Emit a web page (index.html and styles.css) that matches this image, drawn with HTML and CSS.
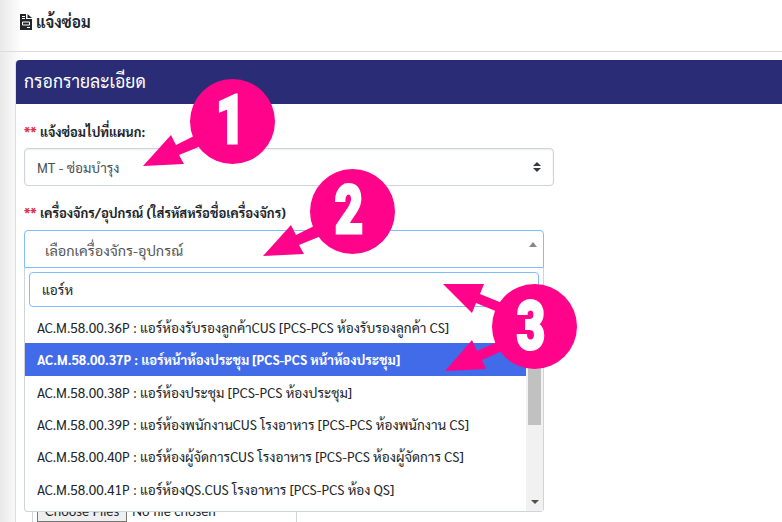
FILE: index.html
```html
<!DOCTYPE html>
<html lang="th">
<head>
<meta charset="utf-8">
<title>แจ้งซ่อม</title>
<link rel="stylesheet" href="styles.css">
</head>
<body>
<header class="topbar">
  <svg class="doc" viewBox="0 0 12 16" width="12" height="16"><path d="M0 0h6v5h6v11H0zM7.500 0L12 4H7.500z" fill="#212529"/><path d="M2 2.500h3M2 4.500h3M7 13.500h3" stroke="#fff"/><path d="M2.500 8h7v3h-7z" fill="none" stroke="#fff"/></svg>
  <h1><span class="fit t-title">แจ้งซ่อม</span></h1>
</header>
<main class="card">
  <div class="card-head"><span class="fit t-head">กรอกรายละเอียด</span></div>
  <div class="card-body">
    <label class="label"><b class="req">**</b><span class="fit t-l1">แจ้งซ่อมไปที่แผนก:</span></label>
    <div class="select"><span class="fit t-s1">MT - ซ่อมบำรุง</span>
      <svg width="8" height="10" viewBox="0 0 8 10"><path d="M0 4l4-4 4 4zM0 6h8l-4 4z" fill="#343a40"/></svg>
    </div>
    <label class="label second"><b class="req">**</b><span class="fit t-l2">เครื่องจักร/อุปกรณ์ (ใส่รหัสหรือชื่อเครื่องจักร)</span></label>
    <div class="combo">
      <div class="combo-value"><span class="fit t-s2">เลือกเครื่องจักร-อุปกรณ์</span>
        <svg width="8" height="5" viewBox="0 0 8 5"><path d="M0 5l4-5 4 5z" fill="#888"/></svg>
      </div>
      <div class="menu">
        <div class="search"><span class="fit">แอร์ห</span></div>
        <div class="list">
          <ul>
            <li><span class="fit">AC.M.58.00.36P : แอร์ห้องรับรองลูกค้าCUS [PCS-PCS ห้องรับรองลูกค้า CS]</span></li>
            <li class="active"><span class="fit">AC.M.58.00.37P : แอร์หน้าห้องประชุม [PCS-PCS หน้าห้องประชุม]</span></li>
            <li><span class="fit">AC.M.58.00.38P : แอร์ห้องประชุม [PCS-PCS ห้องประชุม]</span></li>
            <li><span class="fit">AC.M.58.00.39P : แอร์ห้องพนักงานCUS โรงอาหาร [PCS-PCS ห้องพนักงาน CS]</span></li>
            <li><span class="fit">AC.M.58.00.40P : แอร์ห้องผู้จัดการCUS โรงอาหาร [PCS-PCS ห้องผู้จัดการ CS]</span></li>
            <li><span class="fit">AC.M.58.00.41P : แอร์ห้องQS.CUS โรงอาหาร [PCS-PCS ห้อง QS]</span></li>
          </ul>
          <div class="scroll"><div class="thumb"></div><svg width="8" height="4" viewBox="0 0 8 4"><path d="M0 0h8l-4 4z" fill="#505050"/></svg></div>
        </div>
      </div>
    </div>
    <div class="upload"><span class="choose">Choose Files</span><span>No file chosen</span></div>
  </div>
</main>
<svg class="marks" width="782" height="522" viewBox="0 0 782 522">
  <g fill="#ff048b">
    <circle cx="232.500" cy="121.500" r="42.500"/><path d="M143 166l28-31 5 10 20-10 5 11-22 9 5 9z"/>
    <circle cx="352.500" cy="211.500" r="42.500"/><path d="M263 256l28-31 5 10 20-10 5 11-22 9 5 9z"/>
    <circle cx="534.500" cy="326.500" r="42.500"/><path d="M443 284h41l-4 10 22 9-4 9-22-9-4 10zM445 371l27-31 5 11 20-9 5 9-20 9 4 9z"/>
  </g>
  <g class="nums">
    <text transform="translate(230.500 143) scale(.76 1)">1</text>
    <text transform="translate(349 233) scale(.74 1)">2</text>
    <text transform="translate(531 348.500) scale(.74 1)">3</text>
  </g>
</svg>
</body>
</html>
```
FILE: styles.css
```css
* { box-sizing: border-box; }
body { margin: 0; width: 782px; height: 522px; overflow: hidden; position: relative; background: linear-gradient(90deg, #e9e9e9 0, #fff 22px); font: 14px/20px Sarabun, Lato, "Noto Sans Thai Looped", "Noto Looped Thai", Loma, Garuda, Waree, Umpush, Laksaman, sans-serif; color: #212529; }
.fit { display: inline-block; white-space: nowrap; transform: scaleX(.971); transform-origin: 0 50%; }
.topbar { height: 52px; border-bottom: 1px solid #dcdcdc; display: flex; align-items: center; gap: 4px; padding: 0 20px 8px; }
h1 { margin: 0; font-size: 16px; line-height: 24px; font-weight: 700; }
.t-title { transform: scaleX(.955); }
.t-head { transform: scaleX(.975); }
.t-l1 { transform: scaleX(.92); }
.t-l2 { transform: scaleX(.933); }
.t-s2 { transform: scaleX(1.03); }
.card { margin: 8px 0 0 15px; height: 462px; border-left: 1px solid #dedede; border-radius: 4px 0 0; background: #fff; }
.card-head { height: 44px; padding: 0 8px 2px; display: flex; align-items: center; background: #2a2d75; color: #fff; font-size: 18px; border-radius: 4px 0 0; }
.card-body { padding: 17px 0 0 8px; }
.label { display: flex; gap: 3px; height: 27px; line-height: 20px; font-weight: 700; }
.req { color: #dc3545; }
.select { width: 530px; height: 38px; border: 1px solid #ced4da; border-radius: 4px; display: flex; align-items: center; justify-content: space-between; padding: 0 12px; color: #495057; box-shadow: inset 0 1px 2px rgba(0,0,0,.075); }
.second { margin-top: 16px; height: 28px; }
.combo { width: 520px; position: relative; }
.combo-value { height: 38px; border: 1px solid #80bdff; border-radius: 4px 4px 0 0; display: flex; justify-content: space-between; padding: 9px 6px 0 20px; color: #555; }
.combo-value svg { margin-top: 2px; }
.menu { position: absolute; top: 38px; left: 0; width: 520px; height: 244px; border: 1px solid #ced4da; border-top: 0; border-radius: 0 0 4px 4px; background: #fff; padding: 4px 0 0; }
.search { margin: 0 4px; height: 35px; border: 1px solid #80bdff; border-radius: 4px; padding: 6px 12px; }
.list { display: flex; height: 201px; margin-top: 3px; }
ul { list-style: none; margin: 0; padding: 0; flex: 1; }
li { height: 32.400px; display: flex; align-items: center; padding: 1px 0 0 12px; }
li:first-child { height: 33px; padding-top: 0; }
li:nth-child(3) { height: 31.800px; }
li:nth-child(n+4) { padding-top: 0; }
.active { background: #416be9; color: #fff; font-weight: 700; height: 33px; padding: 0 0 1px 12px; }
.active .fit { transform: scaleX(.936); }
.scroll { width: 17px; background: #f1f1f1; display: flex; flex-direction: column; align-items: center; justify-content: space-between; padding: 18px 0 7px; }
.thumb { width: 13px; height: 97px; background: #c1c1c1; }
.upload { margin: 227px 0 0 8px; width: 265px; height: 27px; border: 1px solid #ced4da; border-bottom: 0; padding: 5px 4px 0; display: flex; gap: 5px; font: 13.333px/20px Lato, sans-serif; white-space: nowrap; }
.choose { border: 1px solid #767676; background: #efefef; height: 21px; line-height: 18px; width: 90px; text-align: center; }
.marks { position: absolute; left: 0; top: 0; }
.nums text { font: 900 66px Roboto, sans-serif; fill: #fff; stroke: #fff; stroke-width: 3px; text-anchor: middle; }
```
